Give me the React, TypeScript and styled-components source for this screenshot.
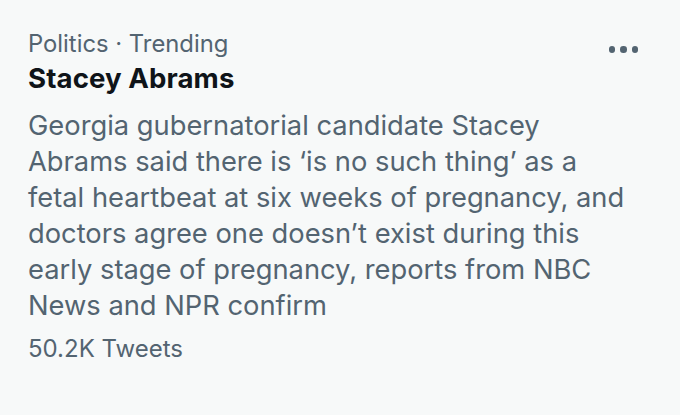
import styled, { createGlobalStyle } from "styled-components"

const GlobalStyle = createGlobalStyle`
  html, body {
    margin: 0;
    padding: 0;
    background: #f7f9f9;
  }
  body {
    font-family: Inter, "Noto Sans", "Liberation Sans", sans-serif;
    -webkit-font-smoothing: antialiased;
  }
`

const Card = styled.div`
  width: 680px;
  height: 415px;
  box-sizing: border-box;
  padding: 28px 42px 0 28px;
  background: #f7f9f9;
  display: flex;
  flex-direction: column;
`

const TopRow = styled.div`
  display: flex;
  justify-content: space-between;
  align-items: flex-start;
`

const Meta = styled.span`
  font-size: 23.8px;
  line-height: 32px;
  color: #536471;
`

const Title = styled.div`
  font-size: 27.6px;
  line-height: 36px;
  font-weight: 700;
  color: #0f1419;
  letter-spacing: 0.1px;
`

const Body = styled.p`
  margin: 12px 0 0;
  max-width: 606px;
  font-size: 27.3px;
  line-height: 36px;
  color: #536471;
`

const Count = styled.div`
  font-size: 24px;
  line-height: 32px;
  color: #536471;
  margin-top: 9px;
`

const MoreButton = styled.button`
  border: none;
  background: none;
  padding: 0;
  margin: 18px 0 0;
  display: flex;
  gap: 5px;
  cursor: pointer;
`

const Dot = styled.span`
  width: 6.5px;
  height: 6.5px;
  border-radius: 50%;
  background: #536471;
`

export default function App() {
  return (
    <>
      <GlobalStyle />
      <Card>
        <TopRow>
          <Meta>Politics · Trending</Meta>
          <MoreButton aria-label="More">
            <Dot />
            <Dot />
            <Dot />
          </MoreButton>
        </TopRow>
        <Title>Stacey Abrams</Title>
        <Body>
          Georgia gubernatorial candidate Stacey Abrams said there is ‘is no such thing’ as a fetal
          heartbeat at six weeks of pregnancy, and doctors agree one doesn’t exist during this early
          stage of pregnancy, reports from NBC News and NPR confirm
        </Body>
        <Count>50.2K Tweets</Count>
      </Card>
    </>
  )
}
